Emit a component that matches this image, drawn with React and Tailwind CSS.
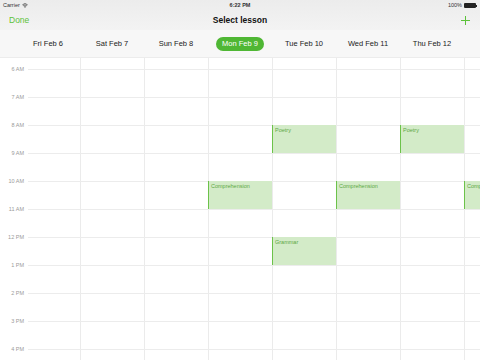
import React from 'react';

const days = ['Fri Feb 6', 'Sat Feb 7', 'Sun Feb 8', 'Mon Feb 9', 'Tue Feb 10', 'Wed Feb 11', 'Thu Feb 12'];
const hours = ['6 AM', '7 AM', '8 AM', '9 AM', '10 AM', '11 AM', '12 PM', '1 PM', '2 PM', '3 PM', '4 PM'];

// col index from Fri Feb 6 = 0, start hour in 24h
const lessons = [
  { title: 'Poetry', col: 4, start: 8 },
  { title: 'Poetry', col: 6, start: 8 },
  { title: 'Comprehension', col: 3, start: 10 },
  { title: 'Comprehension', col: 5, start: 10 },
  { title: 'Comprehension', col: 7, start: 10 },
  { title: 'Grammar', col: 4, start: 12 },
];

const App = () => {
  return (
    <div className="w-[480px] h-[360px] overflow-hidden bg-white font-['Liberation_Sans',Arial,sans-serif]">
      {/* Status + nav bar */}
      <div className="bg-gradient-to-b from-[#ececec] to-[#f3f3f3]">
        <div className="h-[11px] flex items-center justify-between px-[3px] text-[5.5px] text-[#333]">
          <div className="w-[60px] flex items-center gap-[2px]">
            <span>Carrier</span>
            <svg width="6" height="5" viewBox="0 0 12 10">
              <path d="M6 9.5 L4 7.3 A3 3 0 0 1 8 7.3 Z" fill="#333" />
              <path d="M2.4 5.6 A5.3 5.3 0 0 1 9.6 5.6" stroke="#333" strokeWidth="1.4" fill="none" />
              <path d="M0.8 3.6 A7.5 7.5 0 0 1 11.2 3.6" stroke="#333" strokeWidth="1.4" fill="none" />
            </svg>
          </div>
          <span className="font-bold">6:22 PM</span>
          <div className="w-[60px] flex items-center justify-end gap-[2px]">
            <span>100%</span>
            <div className="flex items-center">
              <div className="w-[12px] h-[5px] bg-[#222] rounded-[1px]" />
              <div className="w-[1px] h-[2px] bg-[#222]" />
            </div>
          </div>
        </div>
        <div className="h-[19px] flex items-center justify-between px-[9px] pb-[1px]">
          <span className="w-[40px] text-[8.5px] text-[#5cc23a]">Done</span>
          <span className="text-[8.5px] font-bold text-[#111]">Select lesson</span>
          <div className="w-[40px] flex justify-end pr-[1px]">
            <svg width="9" height="9" viewBox="0 0 9 9">
              <path d="M4.5 0 V9 M0 4.5 H9" stroke="#5cc23a" strokeWidth="1" />
            </svg>
          </div>
        </div>
      </div>

      {/* Date strip */}
      <div className="h-[28px] bg-[#f7f7f7] border-b border-[#ececec] flex pl-[16px]">
        {days.map((d, i) => (
          <div key={d} className="w-[64px] shrink-0 flex items-center justify-center">
            {i === 3 ? (
              <span className="h-[14px] px-[6px] rounded-full bg-[#4fb734] text-white text-[7.5px] flex items-center">{d}</span>
            ) : (
              <span className="text-[7.5px] text-[#222]">{d}</span>
            )}
          </div>
        ))}
      </div>

      {/* Grid */}
      <div className="relative pt-[11px]">
        {/* day column lines */}
        <div className="absolute top-0 bottom-0 left-[80px] right-0 flex">
          {[0, 1, 2, 3, 4, 5, 6].map((c) => (
            <div key={c} className="w-[64px] shrink-0 border-l border-[#ebebeb]" />
          ))}
        </div>

        {hours.map((h) => (
          <div key={h} className="relative h-[28px]">
            <div className="ml-[28px] border-t border-[#ececec]" />
            <span className="absolute left-0 top-[-3px] w-[24px] text-right text-[5.5px] leading-[6px] text-[#9a9a9a]">{h}</span>
          </div>
        ))}

        {lessons.map((l, i) => (
          <div
            key={i}
            className="absolute h-[28px] w-[64px] bg-[#d3ebc8] border-l border-[#6cc24a] px-[2px] pt-[1px] text-[5.5px] text-[#5da844]"
            style={{ left: 16 + l.col * 64, top: 11 + (l.start - 6) * 28 }}
          >
            {l.title}
          </div>
        ))}
      </div>
    </div>
  );
};

export default App;
